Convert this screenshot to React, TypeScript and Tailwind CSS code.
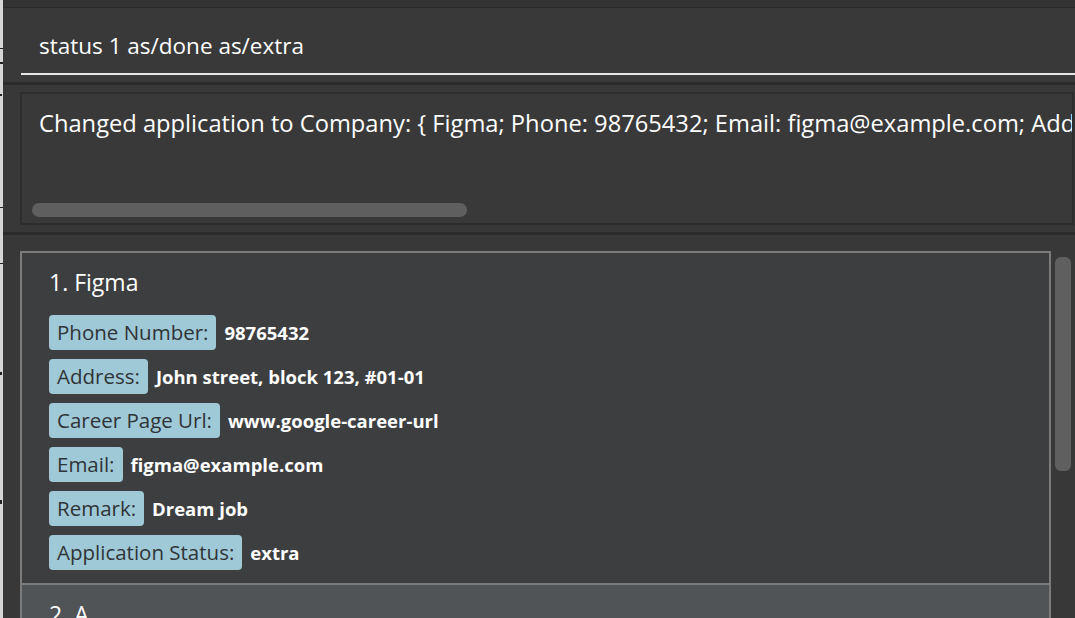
const font = { fontFamily: '"Open Sans", "Noto Sans", sans-serif' };

const fields: [string, string][] = [
  ["Phone Number:", "98765432"],
  ["Address:", "John street, block 123, #01-01"],
  ["Career Page Url:", "www.google-career-url"],
  ["Email:", "figma@example.com"],
  ["Remark:", "Dream job"],
  ["Application Status:", "extra"],
];

function Field({ label, value }: { label: string; value: string }) {
  return (
    <div className="flex items-center gap-2">
      <span className="rounded-[4px] bg-[#9fc9d6] px-2 h-[35px] leading-[35px] text-[20.5px] text-[#2f3436] whitespace-nowrap">
        {label}
      </span>
      <span className="text-[18.5px] font-bold text-white whitespace-nowrap">{value}</span>
    </div>
  );
}

function LeftEdge() {
  // sliver of another window behind
  return (
    <div className="relative w-[3px] shrink-0 bg-[#d6d6d6]">
      <div className="absolute left-0 top-[48px] h-[1px] w-[3px] bg-[#222]" />
      <div className="absolute left-0 top-[62px] h-[2px] w-[3px] bg-[#222]" />
      <div className="absolute left-0 top-[94px] h-[2px] w-[2px] bg-[#222]" />
      <div className="absolute left-0 top-[207px] h-[1px] w-[3px] bg-[#222]" />
      <div className="absolute left-0 top-[263px] h-[1px] w-[3px] bg-[#222]" />
      <div className="absolute left-0 top-[372px] h-[3px] w-[2px] bg-[#222]" />
      <div className="absolute left-0 top-[500px] h-[4px] w-[2px] bg-[#222]" />
    </div>
  );
}

export default function App() {
  return (
    <div className="flex h-[618px] w-[1075px] overflow-hidden bg-[#383838]" style={font}>
      <LeftEdge />
      <div className="flex min-w-0 flex-1 flex-col">
        {/* top strip */}
        <div className="h-[8px] shrink-0 border-b border-[#2a2a2a] bg-[#333333]" />

        {/* command box */}
        <div className="shrink-0 bg-[#393939] pl-[18px] pt-[17px] h-[74px]">
          <div className="border-b-2 border-[#e6e6e6] pl-[18px] pt-[6px] h-[50px] text-[22.5px] leading-[30px] text-white whitespace-nowrap">
            status 1 as/done as/extra
          </div>
        </div>
        <div className="h-[3px] shrink-0 bg-[#2b2b2b]" />

        {/* result display */}
        <div className="shrink-0 bg-[#383838] py-[7px] pl-[17px] pr-[1px]">
          <div className="flex h-[133px] flex-col overflow-hidden border-2 border-[#2d2d2d] bg-[#393939]">
            <div className="pl-[17px] pt-[13px] text-[23.7px] leading-[32px] text-white whitespace-nowrap">
              Changed application to Company: {"{"} Figma; Phone: 98765432; Email: figma@example.com; Address: John street, block 123, #01-01; Career Page Url: www.google-career-url; Remark: Dream job {"}"}
            </div>
            <div className="mt-auto mb-[6px] ml-[10px] h-[14px] w-[435px] rounded-full bg-[#5f5f5f]" />
          </div>
        </div>
        <div className="h-[3px] shrink-0 bg-[#2b2b2b]" />

        {/* application list */}
        <div className="flex min-h-0 flex-1 gap-[4px] bg-[#383838] pl-[17px] pt-[16px] pr-[4px]">
          <div className="flex min-w-0 flex-1 flex-col border-x-2 border-t-2 border-[#7b7b7b]">
            <div className="flex shrink-0 flex-col gap-[9px] bg-[#3d3e40] pl-[27px] pt-[14px] pb-[13px]">
              <div className="mb-[9px] text-[23px] text-white leading-[30px]">1. Figma</div>
              {fields.map(([l, v]) => (
                <Field key={l} label={l} value={v} />
              ))}
            </div>
            <div className="flex-1 border-t-2 border-[#7b7b7b] bg-[#505457] pl-[27px] pt-[14px]">
              <div className="text-[23px] text-white leading-[30px]">2. A</div>
            </div>
          </div>
          <div className="w-[16px] shrink-0 pt-[6px]">
            <div className="h-[214px] w-[16px] rounded-[6px] bg-[#5f5f5f]" />
          </div>
        </div>
      </div>
    </div>
  );
}
